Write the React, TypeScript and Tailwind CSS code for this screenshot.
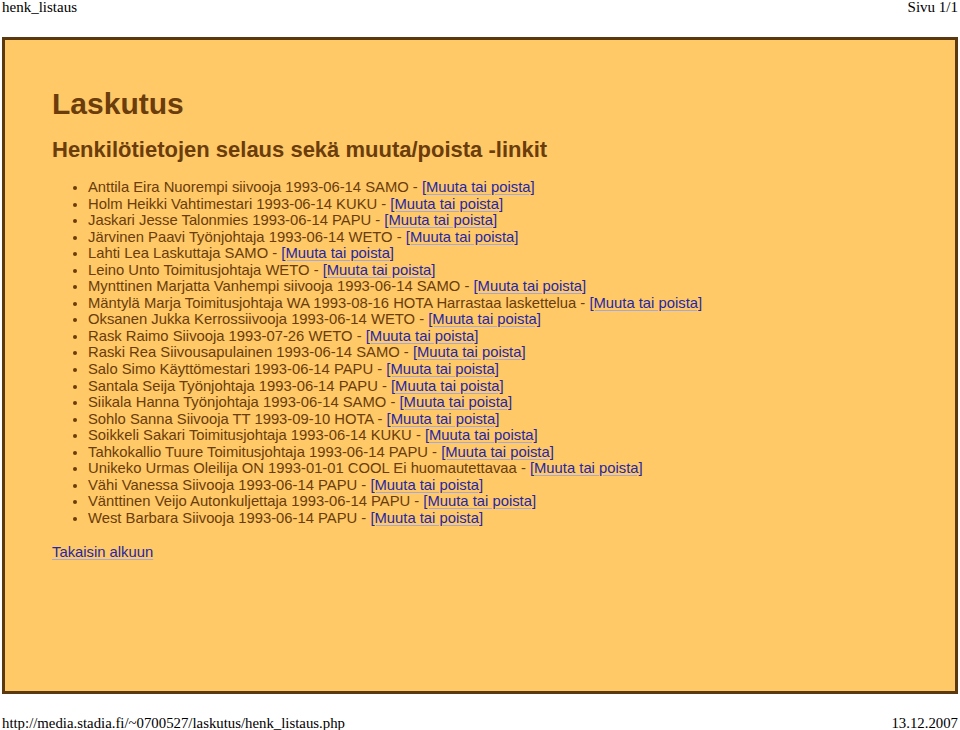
import React from 'react'

interface Person { text: string }

const people: Person[] = [
  { text: 'Anttila Eira Nuorempi siivooja 1993-06-14 SAMO' },
  { text: 'Holm Heikki Vahtimestari 1993-06-14 KUKU' },
  { text: 'Jaskari Jesse Talonmies 1993-06-14 PAPU' },
  { text: 'Järvinen Paavi Työnjohtaja 1993-06-14 WETO' },
  { text: 'Lahti Lea Laskuttaja SAMO' },
  { text: 'Leino Unto Toimitusjohtaja WETO' },
  { text: 'Mynttinen Marjatta Vanhempi siivooja 1993-06-14 SAMO' },
  { text: 'Mäntylä Marja Toimitusjohtaja WA 1993-08-16 HOTA Harrastaa laskettelua' },
  { text: 'Oksanen Jukka Kerrossiivooja 1993-06-14 WETO' },
  { text: 'Rask Raimo Siivooja 1993-07-26 WETO' },
  { text: 'Raski Rea Siivousapulainen 1993-06-14 SAMO' },
  { text: 'Salo Simo Käyttömestari 1993-06-14 PAPU' },
  { text: 'Santala Seija Työnjohtaja 1993-06-14 PAPU' },
  { text: 'Siikala Hanna Työnjohtaja 1993-06-14 SAMO' },
  { text: 'Sohlo Sanna Siivooja TT 1993-09-10 HOTA' },
  { text: 'Soikkeli Sakari Toimitusjohtaja 1993-06-14 KUKU' },
  { text: 'Tahkokallio Tuure Toimitusjohtaja 1993-06-14 PAPU' },
  { text: 'Unikeko Urmas Oleilija ON 1993-01-01 COOL Ei huomautettavaa' },
  { text: 'Vähi Vanessa Siivooja 1993-06-14 PAPU' },
  { text: 'Vänttinen Veijo Autonkuljettaja 1993-06-14 PAPU' },
  { text: 'West Barbara Siivooja 1993-06-14 PAPU' },
]

const linkCls = 'text-[#2626a6] underline decoration-[#a8a8d8] underline-offset-2'

export default function App() {
  return (
    <div className="w-[960px] h-[730px] bg-white flex flex-col font-['Liberation_Serif',serif] text-black overflow-hidden">
      {/* Page header */}
      <div className="flex justify-between px-[2px] text-[15px] leading-[15px] h-[37px]">
        <span>henk_listaus</span>
        <span>Sivu 1/1</span>
      </div>

      {/* Content box */}
      <div className="mx-[2px] h-[657px] border-[3px] border-[#5a3810] bg-[#fec966] pl-[47px] pt-[46px] font-['Liberation_Sans',Arial,sans-serif] text-[#6b3c0c]">
        <h1 className="text-[30px] leading-[36px] font-bold">Laskutus</h1>
        <h2 className="mt-[15px] text-[22px] leading-[26px] font-bold">Henkilötietojen selaus sekä muuta/poista -linkit</h2>

        <ul className="mt-[16px] pl-[36px] list-disc text-[14.8px] leading-[16.55px]">
          {people.map((p) => (
            <li key={p.text}>
              {p.text} - <a className={linkCls}>[Muuta tai poista]</a>
            </li>
          ))}
        </ul>

        <p className="mt-[18px] text-[14.8px] leading-[16px]">
          <a className={linkCls}>Takaisin alkuun</a>
        </p>
      </div>

      {/* Page footer */}
      <div className="flex justify-between px-[2px] mt-[22px] text-[14.8px] leading-[14px]">
        <span>http://media.stadia.fi/~0700527/laskutus/henk_listaus.php</span>
        <span>13.12.2007</span>
      </div>
    </div>
  )
}
